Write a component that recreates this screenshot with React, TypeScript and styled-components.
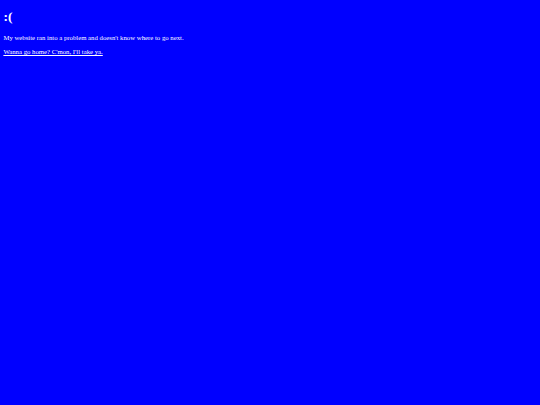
import React from 'react';
import styled, {createGlobalStyle} from 'styled-components';

const GlobalStyle = createGlobalStyle`
	html, body {
		margin: 0;
		padding: 0;
		background: #0000ff;
	}
	body {
		min-height: 405px;
	}
`;

const Page = styled.div`
	min-height: 405px;
	box-sizing: border-box;
	padding: 3.4px;
	background: #0000ff;
	color: #ffffff;
	font-family: "Liberation Serif", "Times New Roman", serif;
	display: flow-root;
`;

const Face = styled.h1`
	font-size: 13.5px;
	font-weight: bold;
	margin: 6px 0 9px;
	line-height: normal;
`;

const Message = styled.p`
	font-size: 6.75px;
	margin: 6.75px 0;
	line-height: normal;
`;

const HomeLink = styled.a`
	color: #ffffff;
	text-decoration: underline;
`;

const App: React.FC = () => {
	return (
		<>
			<GlobalStyle />
			<Page>
				<Face>:(</Face>
				<Message>My website ran into a problem and doesn't know where to go next.</Message>
				<Message>
					<HomeLink href="/">Wanna go home? C'mon, I'll take ya.</HomeLink>
				</Message>
			</Page>
		</>
	);
};

export default App;
